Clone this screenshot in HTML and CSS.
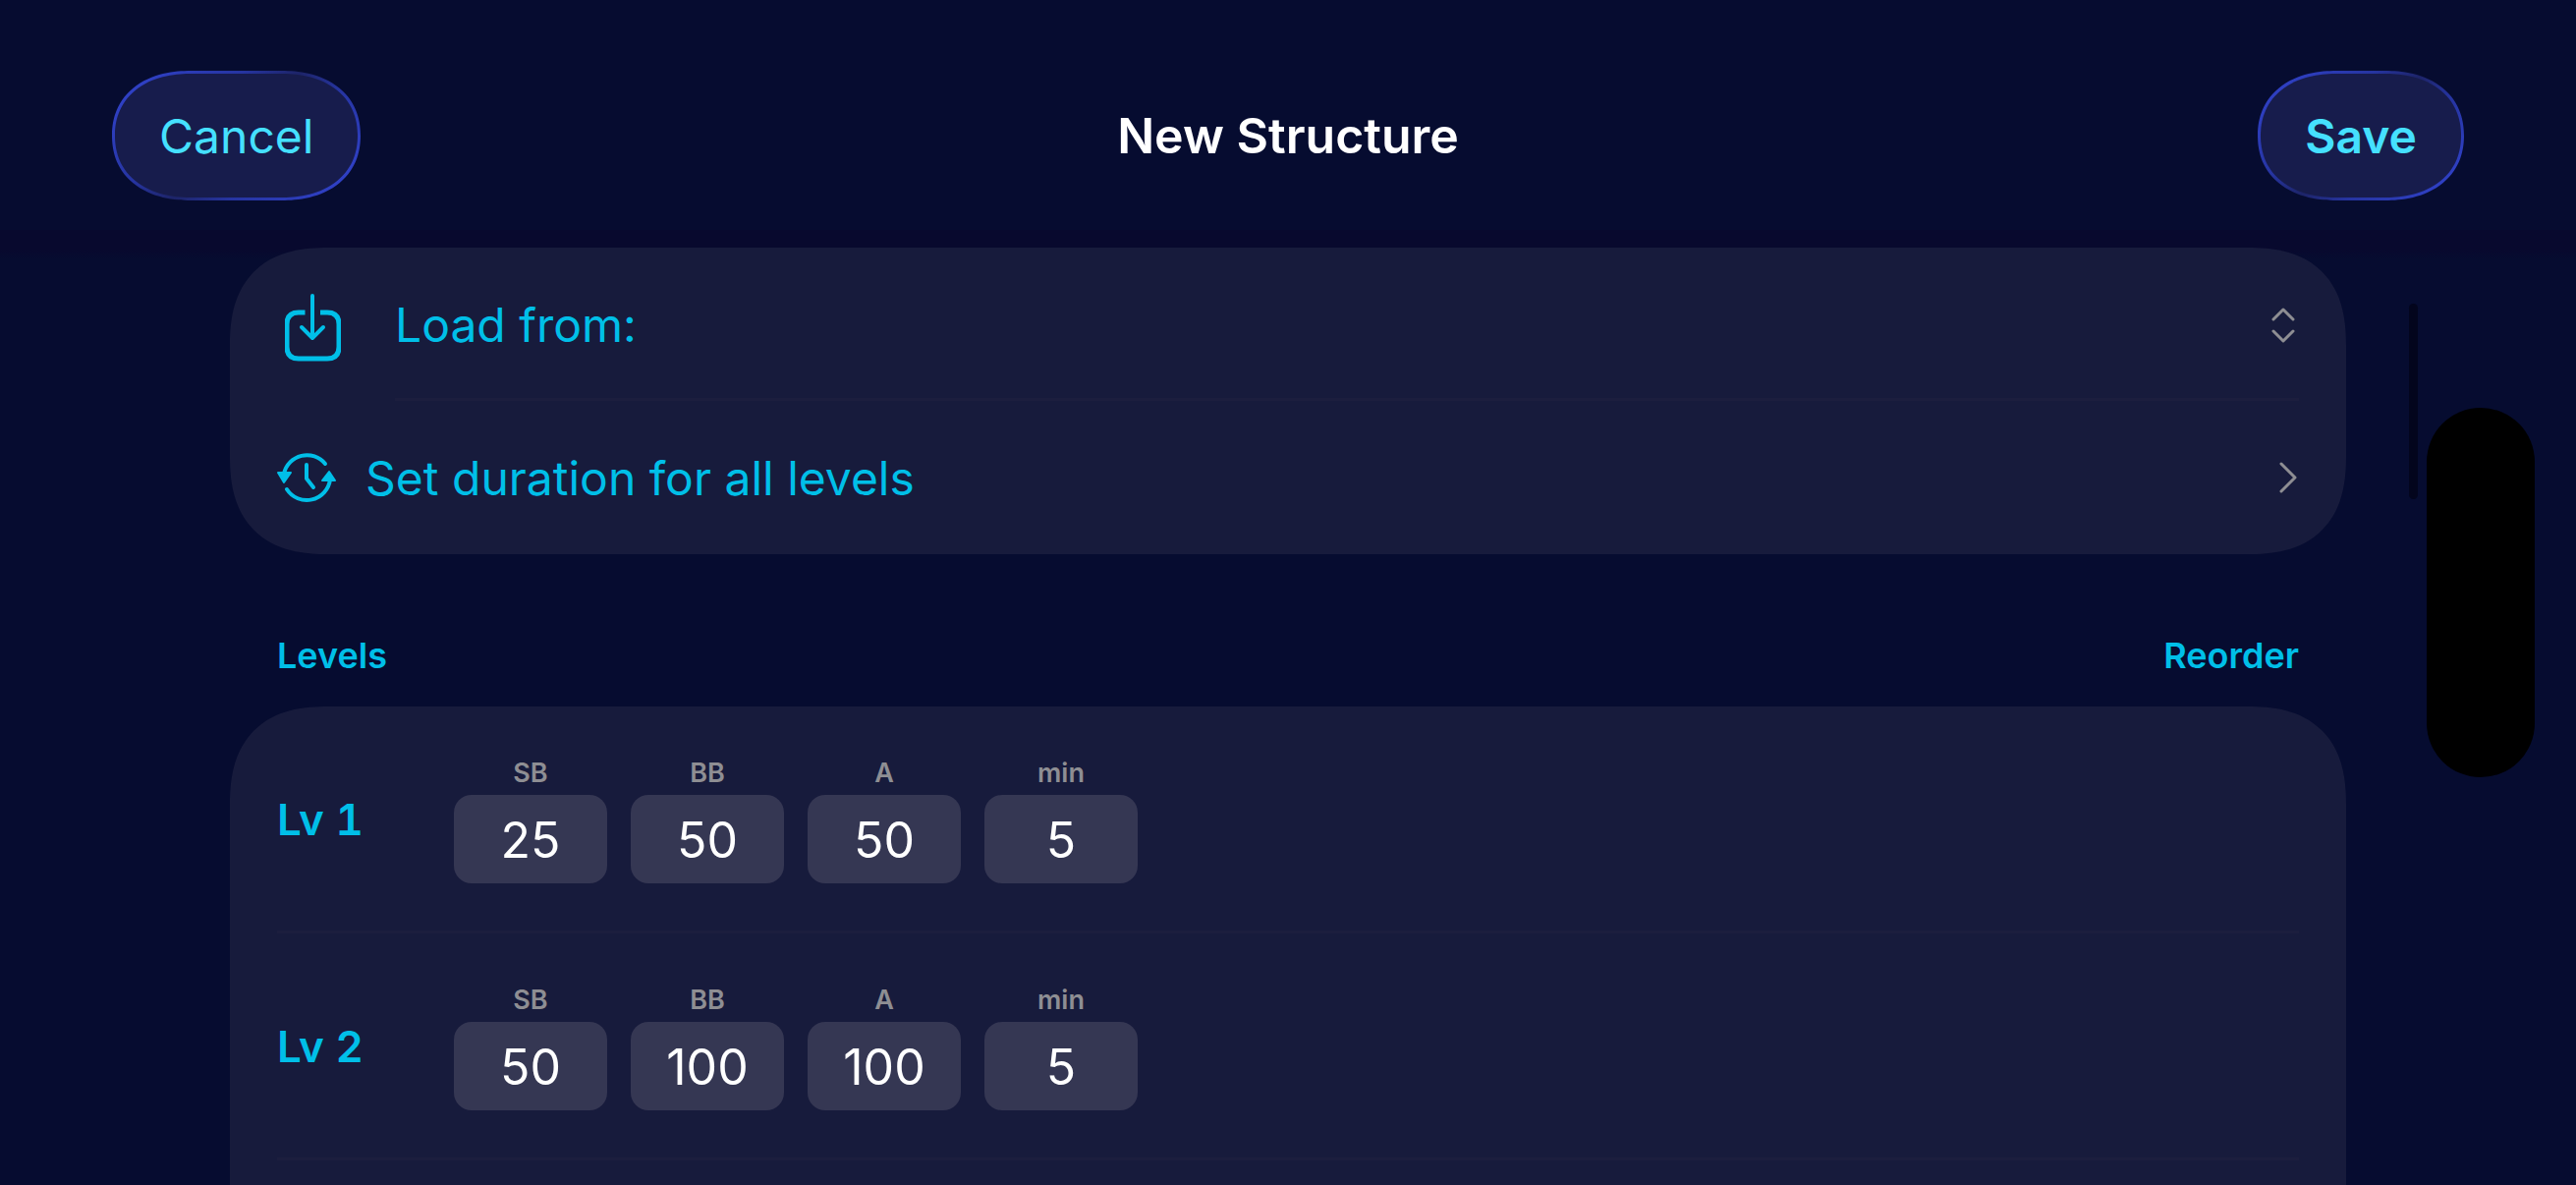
FILE: index.html
```html
<!DOCTYPE html>
<html lang="en">
    <head>
        <meta charset="UTF-8">
        <meta name="viewport" content="width=device-width, initial-scale=1">
        <title>New Structure</title>
        <link rel="stylesheet" href="styles.css">
    </head>
    <body>
        <header class="navbar">
            <button class="pill" type="button">Cancel</button>
            <h1>New Structure</h1>
            <button class="pill strong" type="submit" form="structure">Save</button>
        </header>

        <form class="content" id="structure">
            <section class="card">
                <div class="row">
                    <svg class="icon import" viewBox="0 0 57 69" aria-hidden="true">
                        <path class="tray" d="M20.500 19H14Q2 19 2 31V54Q2 66 14 66H43Q55 66 55 54V31Q55 19 43 19H36"/>
                        <path d="M28 2V44M17 34L28 45L39 34"/>
                    </svg>
                    <div class="line separated">
                        <select aria-label="Load from">
                            <option>Load from:</option>
                        </select>
                        <svg class="updown" viewBox="0 0 24 36" aria-hidden="true">
                            <path d="M2 12L12 2L22 12M2 24L12 34L22 24"/>
                        </svg>
                    </div>
                </div>
                <div class="row">
                    <svg class="icon clock" viewBox="0 0 60 52" aria-hidden="true">
                        <path d="M7 22A24 24 0 0 1 49 12"/>
                        <path d="M10 38A24 24 0 0 0 54 28"/>
                        <path d="M30 13V27L37 36"/>
                        <path class="fill" d="M1 21H14L7 31ZM59 29H46L53 20Z"/>
                    </svg>
                    <a class="line" href="#duration">
                        Set duration for all levels
                        <svg class="chevron" viewBox="0 0 18 32" aria-hidden="true">
                            <path d="M2 2L16 16L2 30"/>
                        </svg>
                    </a>
                </div>
            </section>

            <div class="heading">
                <h2>Levels</h2>
                <button type="button">Reorder</button>
            </div>

            <section class="card levels">
                <div class="level">
                    <h3>Lv 1</h3>
                    <label>SB<input type="text" inputmode="numeric" value="25"></label>
                    <label>BB<input type="text" inputmode="numeric" value="50"></label>
                    <label>A<input type="text" inputmode="numeric" value="50"></label>
                    <label>min<input type="text" inputmode="numeric" value="5"></label>
                </div>
                <div class="level">
                    <h3>Lv 2</h3>
                    <label>SB<input type="text" inputmode="numeric" value="50"></label>
                    <label>BB<input type="text" inputmode="numeric" value="100"></label>
                    <label>A<input type="text" inputmode="numeric" value="100"></label>
                    <label>min<input type="text" inputmode="numeric" value="5"></label>
                </div>
            </section>
        </form>

        <div class="scrollbar"></div>
        <div class="island"></div>
    </body>
</html>
```

FILE: styles.css
```css
* {
    box-sizing: border-box;
}

body {
    display: flex;
    flex-direction: column;
    height: 100vh;
    margin: 0;
    overflow: hidden;
    font-family: Inter, "Liberation Sans", sans-serif;
    font-size: 48px;
    background: #060c30;
    color: #00bfe8;
}

button, input, select {
    font: inherit;
    color: inherit;
    background: none;
    border: none;
    padding: 0;
}

h1, h2, h3 {
    margin: 0;
    font-size: inherit;
    font-weight: 600;
}

svg {
    flex: none;
    fill: none;
    stroke: currentColor;
    stroke-width: 4px;
    stroke-linecap: round;
    stroke-linejoin: round;
}

.navbar {
    display: grid;
    grid-template-columns: 1fr auto 1fr;
    align-items: center;
    padding: 72px 114px 30px;

    h1 {
        font-size: 50px;
        color: white;
    }
}

.pill {
    justify-self: start;
    height: 132px;
    padding: 0 45px;
    border: 3px solid transparent;
    border-radius: 80px / 66px;
    corner-shape: superellipse(1.15);
    background:
        linear-gradient(#171c4c, #171c4c) padding-box,
        linear-gradient(135deg, #2f40c4 10%, #2634a0 35%, #1d2468 50%, #2634a0 65%, #2f40c4 90%) border-box;
    color: #45e0ff;
}

.strong {
    justify-self: end;
    font-weight: 600;
}

.content {
    display: flex;
    flex-direction: column;
    flex: 1;
    padding: 18px 234px 0;
    background: linear-gradient(#08092e 20px, #060c30 30px);
}

.card {
    border-radius: 100px;
    corner-shape: superellipse(1.3);
    background: #171b3c;
}

.row {
    display: flex;
    align-items: center;
    height: 156px;
    padding: 0 48px;
}

.line {
    display: flex;
    flex: 1;
    align-items: center;
    justify-content: space-between;
    height: 156px;
    color: inherit;
    text-decoration: none;

    select {
        flex: 1;
        appearance: none;
    }
}

.separated {
    padding-top: 4px;
    border-bottom: 3px solid #1c1e3e;
}

.icon {
    margin-right: 55px;
}

.import {
    width: 57px;
    height: 75px;
    margin-left: 8px;
    padding-top: 6px;

    .tray {
        stroke-width: 5px;
        stroke-linecap: butt;
    }
}

.clock {
    width: 60px;
    height: 52px;
    margin-right: 30px;

    .fill {
        fill: currentColor;
        stroke-width: 2px;
    }
}

.updown, .chevron {
    color: #8e8e93;
    stroke-width: 3px;
}

.updown {
    width: 24px;
    height: 36px;
    margin-right: 4px;
}

.chevron {
    width: 18px;
    height: 32px;
    margin-right: 2px;
}

.heading {
    display: flex;
    justify-content: space-between;
    align-items: center;
    padding: 81px 48px 29px;
    font-size: 36px;
    line-height: 45px;

    button {
        font-weight: 600;
    }
}

.levels {
    flex: 1;
    padding: 0 48px;
    border-radius: 100px 100px 0 0;
}

.level {
    display: flex;
    align-items: center;
    gap: 24px;
    height: 231px;
    padding-top: 2px;
    border-bottom: 3px solid #1c1e3e;

    h3 {
        width: 156px;
        font-size: 44px;
        font-variant-numeric: tabular-nums;
    }

    label {
        display: flex;
        flex-direction: column;
        gap: 6px;
        width: 156px;
        font-size: 27px;
        font-weight: 600;
        line-height: 33px;
        text-align: center;
        color: #8e8e93;
    }

    input {
        width: 100%;
        height: 90px;
        padding-top: 2px;
        border-radius: 18px;
        background: #353753;
        color: white;
        font-size: 50px;
        font-weight: 400;
        text-align: center;
    }
}

.scrollbar {
    position: absolute;
    top: 309px;
    right: 161px;
    width: 9px;
    height: 199px;
    border-radius: 5px;
    background: #03051d;
}

.island {
    position: absolute;
    top: calc(50% - 188px);
    right: 42px;
    width: 110px;
    height: 376px;
    border-radius: 55px;
    background: black;
}
```
